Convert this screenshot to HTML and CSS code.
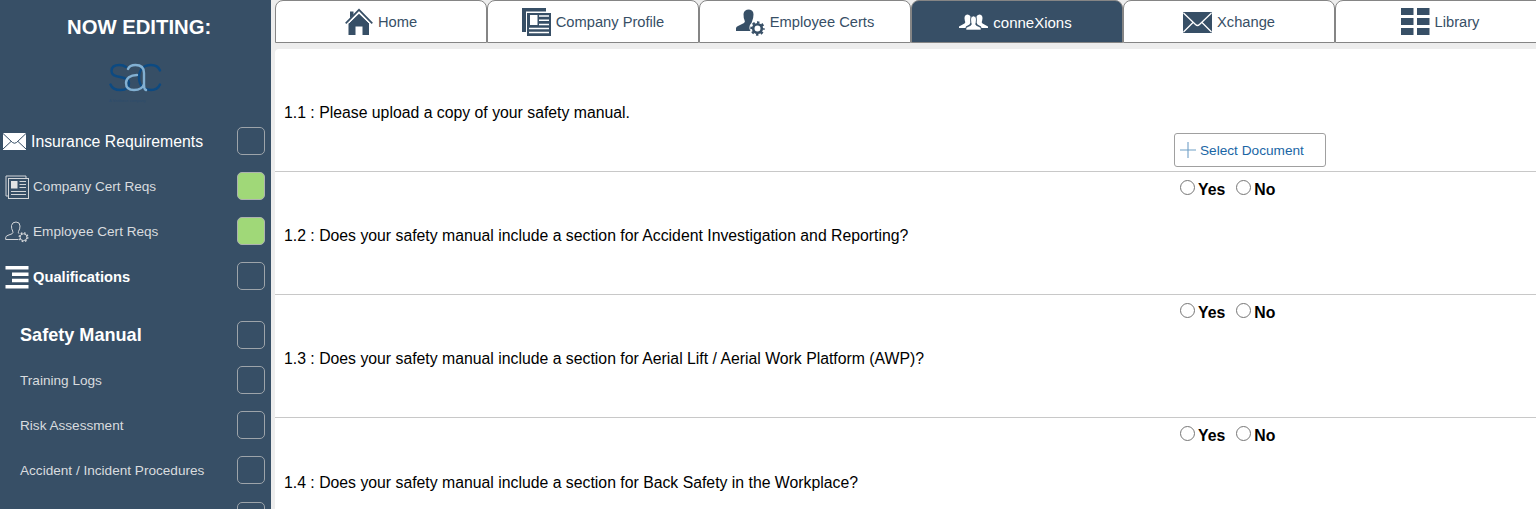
FILE: index.html
```html
<!DOCTYPE html>
<html lang="en">
<head>
    <meta charset="UTF-8">
    <meta name="viewport" content="width=device-width, initial-scale=1.0">
    <title>conneXions - Safety Manual</title>
    <link rel="stylesheet" href="styles.css">
</head>
<body>
    <div class="sidebar">
        <div class="sidebar-title">NOW EDITING:</div>
        <div class="logo">
            <svg width="54" height="30" viewBox="0 0 54 30" fill="none" stroke-width="2.4" stroke-linecap="round">
                <path stroke="#0c4a82" d="M17 4C15 2.300 13 2 10.500 2C5.500 2 2.500 4 2.500 8C2.500 12 5.500 13 11 14C17 15 20 17 20 20.500C20 25 17 27 11.500 27C6 27 3 25.500 1.500 21.500"/>
                <path stroke="#0c4a82" d="M51 7.500C49.500 3.500 46.500 2 42 2C34 2 30 7 30 14.500C30 22 34 27 42 27C46.500 27 49.500 25 51 21.500"/>
                <path stroke="#82b0d2" d="M19 6C20 3.500 22.500 2 26.500 2C32 2 35 5 35 10V22C35 25 35.500 26.500 37 27M28 12C21 12 17 15.500 17 20C17 25 20 27 25 27C30 27 34 25 35 21"/>
            </svg>
            <div class="logo-caption">A Veriforce company</div>
        </div>
        <div class="menu">
            <div class="menu-item large">
                <svg class="icon-mail" width="23" height="17" viewBox="0 0 23 17">
                    <rect width="23" height="17" fill="#fff"/>
                    <path d="M0 .5L9.500 9.500Q11.500 11 13.500 9.500L23 .5M0 16L8 8.500M23 16L15 8.500" fill="none" stroke="#374f66" stroke-width="1"/>
                </svg>
                <span>Insurance Requirements</span>
                <div class="box"></div>
            </div>
            <div class="menu-item">
                <svg width="24" height="24" viewBox="0 0 24 24" fill="none" stroke="#d3d6d9" stroke-width="1">
                    <path d="M3 21H1V1H21V3"/>
                    <rect x="3.500" y="3.500" width="20" height="20"/>
                    <rect x="6" y="6" width="6.500" height="7.500" fill="#e4e4e4" stroke="none"/>
                    <path d="M14.500 6.500H21M14.500 9.500H21M14.500 12.500H21M6 16.500H21M6 19.500H21" stroke-width="1.200"/>
                </svg>
                <span>Company Cert Reqs</span>
                <div class="box done"></div>
            </div>
            <div class="menu-item">
                <svg width="24" height="22" viewBox="0 0 24 22" fill="none" stroke="#d3d6d9" stroke-width="1">
                    <path d="M13.500 18.500H.7V16.500Q1 14.800 3 14.300L7 12.800Q8.500 12 7.700 10Q6.300 8 6.500 4.500Q7.200 1 11 1Q15 1 15 5Q15 8 13.500 10.500Q13 12 14 12.700"/>
                    <circle cx="18.500" cy="16.200" r="3.400"/>
                    <circle cx="18.500" cy="16.200" r="4.300" stroke-width="1.400" stroke-dasharray="1.700 1.677"/>
                </svg>
                <span>Employee Cert Reqs</span>
                <div class="box done"></div>
            </div>
            <div class="menu-item bold">
                <svg width="24" height="23" viewBox="0 0 24 23" fill="#fff">
                    <path d="M.5 0H23.500V3.500H.5zM7 6.500H23.500V10H7zM7 12.700H23.500V16.200H7zM.5 19H23.500V22.500H.5z"/>
                </svg>
                <span>Qualifications</span>
                <div class="box"></div>
            </div>
        </div>
        <div class="menu submenu">
            <div class="menu-item current"><span>Safety Manual</span><div class="box"></div></div>
            <div class="menu-item"><span>Training Logs</span><div class="box"></div></div>
            <div class="menu-item"><span>Risk Assessment</span><div class="box"></div></div>
            <div class="menu-item"><span>Accident / Incident Procedures</span><div class="box"></div></div>
            <div class="menu-item"><span></span><div class="box"></div></div>
        </div>
    </div>

    <div class="main">
        <div class="tabs">
            <div class="tab">
                <svg width="28" height="28" viewBox="0 0 28 28">
                    <path d="M5 10V3.500H8.500V7zM14 5.500L24 15V27H17.500V18.500H10.500V27H3.500V15z" fill="#374f66"/>
                    <path d="M3.500 15.500L14 5.200L24.500 15.500" fill="none" stroke="#fff" stroke-width="1"/>
                    <path d="M.7 15.300L14 1.800L27.300 15.300" fill="none" stroke="#374f66" stroke-width="1.700"/>
                </svg>
                <span>Home</span>
            </div>
            <div class="tab">
                <svg width="29" height="28" viewBox="0 0 29 28">
                    <path d="M0 0H24V3.500H4V24H0z" fill="#374f66"/>
                    <path d="M5 5H29V28H5z" fill="#374f66"/>
                    <path d="M8 7H15.500V17H8z" fill="#fff"/>
                    <path d="M17 8H27M17 12.300H27M17 16.500H27M7 20.500H27M7 24.500H27" stroke="#fff" stroke-width="1.500"/>
                </svg>
                <span>Company Profile</span>
            </div>
            <div class="tab">
                <svg width="29" height="27" viewBox="0 0 29 27">
                    <path d="M0 22V19Q0 17.500 3 16.500L8 14Q9.500 13 8.500 11Q7.500 9.500 7.500 5Q8 .5 13 .5Q17.500 1 17.500 5.500Q17.500 9 16 12.500L15.500 14Q13 16 13.500 20L14.500 22z" fill="#374f66"/>
                    <circle cx="21.500" cy="19.500" r="4.300" fill="none" stroke="#374f66" stroke-width="2.600"/>
                    <circle cx="21.500" cy="19.500" r="6.200" fill="none" stroke="#374f66" stroke-width="2" stroke-dasharray="2.500 2.370" stroke-dashoffset="1.250"/>
                </svg>
                <span>Employee Certs</span>
            </div>
            <div class="tab active">
                <svg width="29" height="17" viewBox="0 0 29 17" fill="#fff">
                    <path d="M0 14V12.500L5.500 9.500Q7 8.500 5.800 6.500Q4.500 1 8.500 .500Q12 1 11.500 4Q10.500 6 11.500 8.500L10.500 10.500L7 12.500L6.500 14z"/>
                    <path d="M29 14V12.500L23.500 9.500Q22 8.500 23.200 6.500Q24.500 1 20.500 .500Q17 1 17.500 4Q18.500 6 17.500 8.500L18.500 10.500L22 12.500L22.500 14z"/>
                    <path d="M7 16V14Q7.500 13 11.500 11.500Q13 10.500 12 8.500Q10.500 2.500 14.500 2Q18.500 2.500 17 8.500Q16 10.500 17.500 11.500Q21.500 13 22 14V16z" stroke="#374f66" stroke-width=".600"/>
                </svg>
                <span>conneXions</span>
            </div>
            <div class="tab">
                <svg width="29" height="21" viewBox="0 0 29 21">
                    <rect width="29" height="21" rx="1" fill="#374f66"/>
                    <path d="M.5 1L12.500 12.500Q14.500 14.500 16.500 12.500L28.500 1M.5 20L10 10.500M28.500 20L19 10.500" fill="none" stroke="#fff" stroke-width="1.300"/>
                </svg>
                <span>Xchange</span>
            </div>
            <div class="tab library">
                <svg width="29" height="27" viewBox="0 0 29 27" fill="#374f66">
                    <path d="M0 0H12.500V7H0zM16 0H28.500V7H16zM0 10H12.500V17H0zM16 10H28.500V17H16zM0 20H12.500V27H0zM16 20H28.500V27H16z"/>
                </svg>
                <span>Library</span>
            </div>
        </div>

        <div class="questions">
            <div class="question first">
                <div class="text">1.1 : Please upload a copy of your safety manual.</div>
                <div class="answer">
                    <button class="select-button">
                        <svg width="16" height="16" viewBox="0 0 16 16"><path d="M8 0V16M0 8H16" stroke="#6f9fc6" stroke-width="1.100"/></svg>
                        <span>Select Document</span>
                    </button>
                </div>
            </div>
            <div class="question">
                <div class="text">1.2 : Does your safety manual include a section for Accident Investigation and Reporting?</div>
                <div class="answer">
                    <label><i class="radio"></i>Yes</label>
                    <label><i class="radio"></i>No</label>
                </div>
            </div>
            <div class="question">
                <div class="text">1.3 : Does your safety manual include a section for Aerial Lift / Aerial Work Platform (AWP)?</div>
                <div class="answer">
                    <label><i class="radio"></i>Yes</label>
                    <label><i class="radio"></i>No</label>
                </div>
            </div>
            <div class="question last">
                <div class="text">1.4 : Does your safety manual include a section for Back Safety in the Workplace?</div>
                <div class="answer">
                    <label><i class="radio"></i>Yes</label>
                    <label><i class="radio"></i>No</label>
                </div>
            </div>
        </div>
    </div>
</body>
</html>
```

FILE: styles.css
```css
* {
    box-sizing: border-box;
}

body {
    display: flex;
    height: 509px;
    margin: 0;
    background-color: #ededed;
    font-family: 'Liberation Sans', Arial, sans-serif;
    overflow: hidden;
}

.sidebar {
    width: 271px;
    height: 509px;
    flex-shrink: 0;
    background-color: #374f66;
    overflow: hidden;
}

.sidebar-title {
    height: 63px;
    padding: 15px 0 0 67px;
    color: #fff;
    font-size: 20.3px;
    line-height: 24px;
    font-weight: bold;
}

.logo {
    height: 56px;
    padding-left: 109px;
}

.logo svg {
    display: block;
}

.logo-caption {
    margin-top: 5px;
    color: #2c4c6c;
    font-size: 4px;
    line-height: 5px;
}

.menu {
    padding-left: 5px;
}

.menu-item {
    display: flex;
    align-items: center;
    gap: 4px;
    height: 45.2px;
    padding-right: 6px;
    color: #d9dcdf;
    font-size: 13.6px;
}

.menu-item svg {
    flex-shrink: 0;
}

.menu-item span {
    flex: 1;
    white-space: nowrap;
}

.menu-item.large {
    gap: 5px;
    color: #fff;
    font-size: 15.8px;
}

.icon-mail {
    margin-left: -2px;
}

.menu-item.bold {
    color: #fff;
    font-size: 14.7px;
    font-weight: bold;
}

.submenu {
    margin-top: 13px;
    padding-left: 20px;
}

.menu-item.current {
    color: #fff;
    font-size: 18.1px;
    font-weight: bold;
}

.box {
    width: 28px;
    height: 28px;
    flex-shrink: 0;
    margin-bottom: 2px;
    border: 1.5px solid #9da4aa;
    border-radius: 5px;
}

.submenu .box {
    margin-bottom: 1px;
}

.box.done {
    background-color: #a0d878;
    border-color: #adb2b0;
}

.main {
    flex: 1;
    padding-left: 4px;
    min-width: 0;
}

.tabs {
    display: flex;
    width: 1272px;
    height: 43px;
}

.tab {
    display: flex;
    justify-content: center;
    align-items: center;
    gap: 5px;
    width: 212px;
    height: 43px;
    padding-top: 1px;
    background-color: #fff;
    border: 1px solid #858585;
    border-radius: 8px 8px 0 0;
    color: #374f66;
    font-size: 14.7px;
}

.tab.active {
    padding-right: 3px;
    background-color: #374f66;
    color: #fff;
}

.tab.active span {
    font-size: 15px;
}

.tab.library {
    padding: 0 2px 0 0;
}

.questions {
    height: 460px;
    margin-top: 6px;
    background-color: #fff;
    border-top-left-radius: 4px;
    overflow: hidden;
}

.question {
    display: flex;
    height: 123.4px;
    padding-left: 9px;
    border-bottom: 1px solid #c8c8c8;
}

.question.first {
    height: 122.5px;
}

.question.last {
    height: 91px;
    border-bottom: none;
}

.text {
    width: 890px;
    padding-top: 55.5px;
    color: #000;
    font-size: 15.81px;
    line-height: 18px;
    white-space: nowrap;
}

.question.first .text {
    padding-top: 55px;
}

.answer {
    display: flex;
    align-items: flex-start;
    gap: 11px;
    padding: 8px 0 0 6px;
}

.question.first .answer {
    padding: 84px 0 0 0;
}

.answer label {
    display: flex;
    gap: 3px;
    font-size: 15.8px;
    line-height: 20px;
    font-weight: bold;
}

.radio {
    width: 15px;
    height: 15px;
    border: 1px solid #767676;
    border-radius: 50%;
}

.select-button {
    display: flex;
    align-items: center;
    gap: 4px;
    width: 152px;
    height: 34px;
    padding: 0 5px;
    background-color: #fff;
    border: 1px solid #a0a0a0;
    border-radius: 3px;
    color: #1a66a5;
    font-family: inherit;
    font-size: 13.65px;
    white-space: nowrap;
}
```
